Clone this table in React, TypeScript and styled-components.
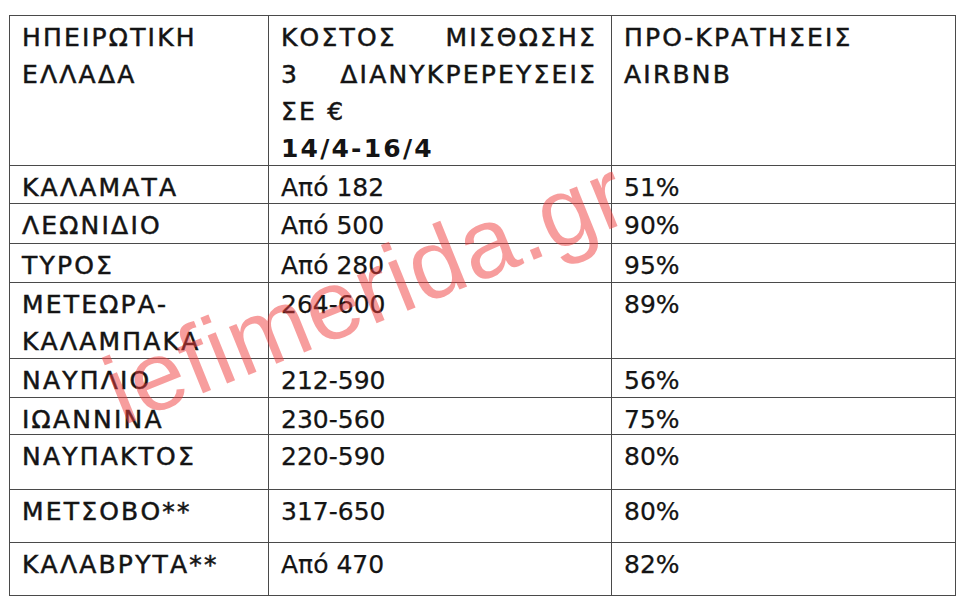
import React from 'react';
import styled, { createGlobalStyle } from 'styled-components';

const Global = createGlobalStyle`
  html, body { margin: 0; padding: 0; background: #ffffff; }
  body { width: 960px; height: 602px; overflow: hidden; }
`;

const LINE = '#4a4a4a';

const Page = styled.div`
  position: relative;
  width: 960px;
  height: 602px;
  box-sizing: border-box;
  padding: 15px 0 0 9px;
  background: #ffffff;
  overflow: hidden;
`;

const Table = styled.div<{ $rows: number[] }>`
  display: grid;
  grid-template-columns: 259px 343px 344px;
  grid-template-rows: ${(p) => p.$rows.map((r) => `${r}px`).join(' ')};
  width: max-content;
  border-left: 1px solid ${LINE};
  border-top: 1px solid ${LINE};
`;

const Cell = styled.div<{ $kind: 'label' | 'value' }>`
  box-sizing: border-box;
  border-right: 1px solid ${LINE};
  border-bottom: 1px solid ${LINE};
  padding: 3px 14px 0 12px;
  font-family: 'DejaVu Sans', 'Noto Sans', sans-serif;
  font-size: 25px;
  line-height: 37px;
  color: #141414;
  letter-spacing: ${(p) => (p.$kind === 'label' ? '2.2px' : '0')};
  -webkit-text-stroke: ${(p) => (p.$kind === 'label' ? '0.5px #141414' : '0.25px #141414')};
  overflow: hidden;
  white-space: nowrap;
`;

const HeadLine = styled.div<{ $justify?: boolean; $bold?: boolean }>`
  text-align: ${(p) => (p.$justify ? 'justify' : 'left')};
  text-align-last: ${(p) => (p.$justify ? 'justify' : 'left')};
  white-space: normal;
  font-weight: ${(p) => (p.$bold ? 700 : 400)};
  -webkit-text-stroke: ${(p) => (p.$bold ? '0px' : 'inherit')};
`;

const Watermark = styled.div`
  position: absolute;
  left: 122px;
  top: 344px;
  transform-origin: 0 81px;
  transform: rotate(-22deg);
  font-family: 'Liberation Sans', Arial, sans-serif;
  font-size: 98px;
  line-height: 96px;
  letter-spacing: 1px;
  color: rgba(240, 60, 60, 0.5);
  white-space: nowrap;
  pointer-events: none;
`;

type Row = { place: string[]; cost: string; booked: string; h: number };

const rows: Row[] = [
  { place: ['ΚΑΛΑΜΑΤΑ'], cost: 'Από 182', booked: '51%', h: 38 },
  { place: ['ΛΕΩΝΙΔΙΟ'], cost: 'Από 500', booked: '90%', h: 40 },
  { place: ['ΤΥΡΟΣ'], cost: 'Από 280', booked: '95%', h: 39 },
  { place: ['ΜΕΤΕΩΡΑ-', 'ΚΑΛΑΜΠΑΚΑ'], cost: '264-600', booked: '89%', h: 76 },
  { place: ['ΝΑΥΠΛΙΟ'], cost: '212-590', booked: '56%', h: 39 },
  { place: ['ΙΩΑΝΝΙΝΑ'], cost: '230-560', booked: '75%', h: 37 },
  { place: ['ΝΑΥΠΑΚΤΟΣ'], cost: '220-590', booked: '80%', h: 55 },
  { place: ['ΜΕΤΣΟΒΟ**'], cost: '317-650', booked: '80%', h: 53 },
  { place: ['ΚΑΛΑΒΡΥΤΑ**'], cost: 'Από 470', booked: '82%', h: 53 },
];

export default function App() {
  const heights = [150, ...rows.map((r) => r.h)];
  return (
    <>
      <Global />
      <Page>
        <Table $rows={heights}>
          <Cell $kind="label">
            <HeadLine>ΗΠΕΙΡΩΤΙΚΗ</HeadLine>
            <HeadLine>ΕΛΛΑΔΑ</HeadLine>
          </Cell>
          <Cell $kind="label">
            <HeadLine $justify>ΚΟΣΤΟΣ ΜΙΣΘΩΣΗΣ</HeadLine>
            <HeadLine $justify>3 ΔΙΑΝΥΚΡΕΡΕΥΣΕΙΣ</HeadLine>
            <HeadLine>ΣΕ €</HeadLine>
            <HeadLine $bold>14/4-16/4</HeadLine>
          </Cell>
          <Cell $kind="label">
            <HeadLine>ΠΡΟ-ΚΡΑΤΗΣΕΙΣ</HeadLine>
            <HeadLine>AIRBNB</HeadLine>
          </Cell>
          {rows.map((r) => (
            <React.Fragment key={r.place.join('')}>
              <Cell $kind="label">
                {r.place.map((p) => (
                  <HeadLine key={p}>{p}</HeadLine>
                ))}
              </Cell>
              <Cell $kind="value">{r.cost}</Cell>
              <Cell $kind="value">{r.booked}</Cell>
            </React.Fragment>
          ))}
        </Table>
        <Watermark>iefimerida.gr</Watermark>
      </Page>
    </>
  );
}
